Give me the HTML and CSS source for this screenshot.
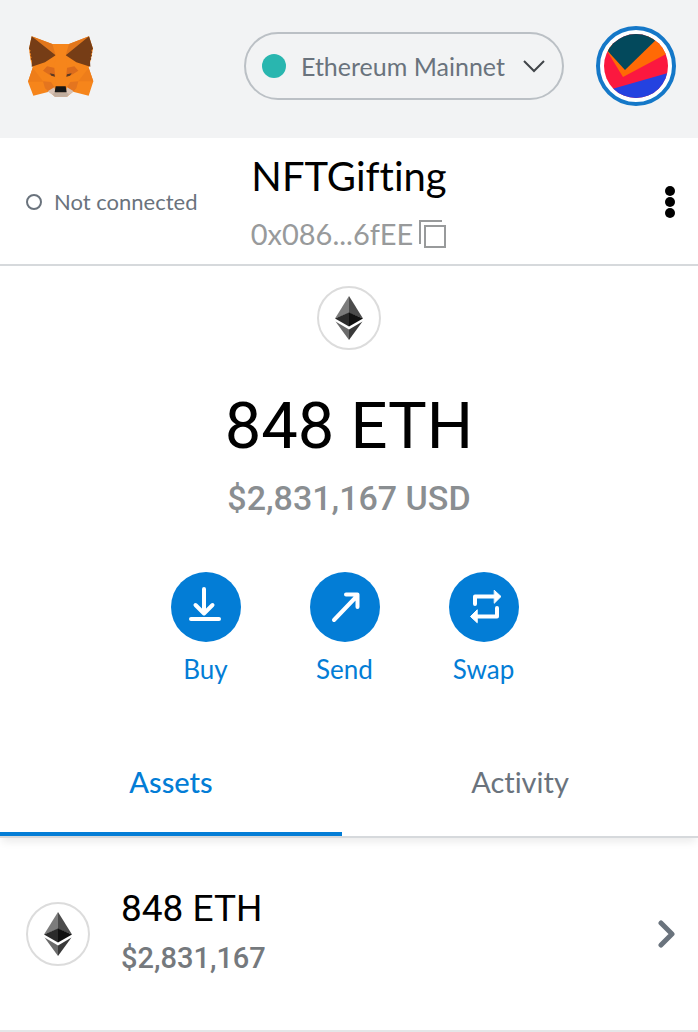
FILE: index.html
```html
<!DOCTYPE html>
<html lang="en">
<head>
    <meta charset="utf-8">
    <meta name="viewport" content="width=device-width, initial-scale=1">
    <title>MetaMask</title>
    <link rel="stylesheet" href="styles.css">
</head>
<body>
    <!-- Shared Ethereum logo -->
    <svg class="sprite" width="0" height="0" aria-hidden="true">
        <symbol id="eth" viewBox="0 0 28 44">
            <path fill="#7c7c7c" d="M14 0L0 22.500 14 17z"/>
            <path fill="#4b4b4b" d="M14 0v17l14 5.500z"/>
            <path fill="#2b2b2b" d="M0 22.500L14 16.500V30.500z"/>
            <path fill="#101010" d="M28 22.500L14 16.500V30.500z"/>
            <path fill="#6b6b6b" d="M0.500 25.500L14 33.500V44z"/>
            <path fill="#3a3a3a" d="M27.500 25.500L14 33.500V44z"/>
        </symbol>
    </svg>

    <header class="app-header">
        <svg class="fox" viewBox="36 27 201 189" role="img" aria-label="MetaMask">
            <path fill="#f6851b" d="M50 31L112 54H162L222 31 234 68 228 98 221 125 235 166 221 209 174 197 156 212H120L102 197 55 209 39 167 53 125 46 98 42 68z"/>
            <path fill="#e2761b" d="M50 31L112 54 122 88zM222 31L162 54 152 88z"/>
            <path fill="#763d16" d="M50 31L42 68 47 74 44 79 48 84 46 89 50 94 47 99 51 104 50 122 90 109 122 88zM222 31L234 68 229 74 232 79 228 84 231 89 227 94 229 99 225 104 226 122 184 109 152 88z"/>
            <path fill="#ee7d1a" d="M53 125L39 167H84V140zM221 125L235 166H190V140z"/>
            <path fill="#f6851b" d="M53 125L84 166 90 134zM221 125L190 166 184 134z"/>
            <path fill="#dc6c1c" d="M84 134L96 121 120 126 122 152 104 147zM190 134L178 121 154 126 152 152 170 147z"/>
            <path fill="#e4751f" d="M84 166L108 168 118 184 102 197 90 187zM190 166L166 168 156 184 174 197 184 187z"/>
            <path fill="#f6851b" d="M122 88L118 126 124 180H150L156 126 152 88 148 54H126z"/>
            <path fill="#5b3a24" d="M104 142L118 145 120 152 109 149zM170 142L156 145 154 152 165 149z"/>
            <path fill="#d7c1b3" d="M98 196L118 184 122 199H152L156 184 176 196 156 212H120z"/>
            <path fill="#c0ad9e" d="M112 204L122 199H152L162 204 156 212H120z"/>
            <path fill="#161616" d="M122 181H152L155 199H119z"/>
        </svg>

        <div class="network">
            <span class="network-dot"></span>
            <select class="network-select" aria-label="Network">
                <option>Ethereum Mainnet</option>
            </select>
            <svg class="network-arrow" viewBox="0 0 22 13" aria-hidden="true"><path d="M1 1l10 10L21 1"/></svg>
        </div>

        <button class="avatar" aria-label="My accounts">
            <svg viewBox="0 0 64 64" aria-hidden="true">
                <path fill="#fb183f" d="M0 0h64v64H0z"/>
                <path fill="#ff6a05" d="M0 12L19 43 64 19V0H50z"/>
                <path fill="#03495c" d="M0 0H58L21 36 0 13z"/>
                <path fill="#2442e0" d="M8 55L64 39V64H8z"/>
            </svg>
        </button>
    </header>

    <section class="account-bar">
        <button class="status"><span class="status-dot"></span>Not connected</button>
        <div class="account">
            <h1 class="account-name">NFTGifting</h1>
            <button class="account-address">0x086...6fEE
                <svg class="copy-icon" viewBox="0 0 28 29" aria-hidden="true"><path d="M1 24V1h22M6 6h20v21H6z"/></svg>
            </button>
        </div>
        <button class="menu" aria-label="Account options">
            <svg viewBox="0 0 10 32" aria-hidden="true"><circle cx="5" cy="5" r="5"/><circle cx="5" cy="16" r="5"/><circle cx="5" cy="27" r="5"/></svg>
        </button>
    </section>

    <main>
        <section class="overview">
            <span class="token"><svg><use href="#eth"/></svg></span>
            <p class="balance">848 ETH</p>
            <p class="balance-usd">$2,831,167 USD</p>

            <div class="actions">
                <button class="action">
                    <span class="action-icon">
                        <svg viewBox="0 0 70 70" aria-hidden="true"><path d="M33 17v24M24.500 33L33 41.500 41.500 33M20 47H48"/></svg>
                    </span>
                    Buy
                </button>
                <button class="action">
                    <span class="action-icon">
                        <svg viewBox="0 0 70 70" aria-hidden="true"><path d="M24 48L47 24M36 22.500H47.500V35"/></svg>
                    </span>
                    Send
                </button>
                <button class="action">
                    <span class="action-icon">
                        <svg viewBox="0 0 70 70" aria-hidden="true">
                            <path d="M26 32V24.500H46M48 36V44.500H28"/>
                            <path class="solid" d="M45.500 18.500L52 24.500 45.500 31zM28 38L21.500 44.500 28 50.500z"/>
                        </svg>
                    </span>
                    Swap
                </button>
            </div>
        </section>

        <div class="tabs" role="tablist">
            <button class="tab active" role="tab" aria-selected="true">Assets</button>
            <button class="tab" role="tab" aria-selected="false">Activity</button>
        </div>

        <button class="asset">
            <span class="token"><svg><use href="#eth"/></svg></span>
            <span class="asset-text">
                <span class="asset-amount">848 ETH</span>
                <span class="asset-usd">$2,831,167</span>
            </span>
            <svg class="asset-arrow" viewBox="0 0 18 28" aria-hidden="true"><path d="M3 3l11 11L3 25"/></svg>
        </button>
    </main>
</body>
</html>
```
FILE: styles.css
```css
* { box-sizing: border-box; }
body {
    margin: 0;
    background: #fff;
    color: #000;
    font-family: Lato, "Liberation Sans", sans-serif;
    font-variant-ligatures: none;
}
h1, p { margin: 0; font-weight: 400; }
button {
    padding: 0;
    border: 0;
    background: none;
    color: inherit;
    font: inherit;
    font-variant-ligatures: none;
    cursor: pointer;
}
svg { display: block; }
.sprite { position: absolute; }

/* Header */
.app-header {
    display: flex;
    align-items: center;
    height: 138px;
    padding: 0 22px 6px 27px;
    background: #f2f3f4;
}
.fox { width: 67px; height: 63px; margin-right: auto; }
.network {
    display: flex;
    align-items: center;
    height: 68px;
    padding: 0 17px 0 16px;
    border: 2px solid #bbc0c5;
    border-radius: 34px;
}
.network-dot {
    width: 24px;
    height: 24px;
    margin-right: 15px;
    border-radius: 50%;
    background: #29b6af;
}
.network-select {
    appearance: none;
    margin-right: 18px;
    padding: 0;
    border: 0;
    background: none;
    color: #6a737d;
    font: 25px/32px Lato, "Liberation Sans", sans-serif;
}
.network-arrow { width: 22px; height: 13px; }
.network-arrow path { fill: none; stroke: #414549; stroke-width: 2; }
.avatar {
    width: 80px;
    height: 80px;
    margin-left: 32px;
    padding: 4px;
    border: 4px solid #1578c8;
    border-radius: 50%;
    background: #fff;
}
.avatar svg { width: 64px; height: 64px; border-radius: 50%; }

/* Account bar */
.account-bar {
    display: grid;
    grid-template-columns: 1fr auto 1fr;
    align-items: center;
    height: 128px;
    padding: 2px 22px 0;
    border-bottom: 2px solid #d6d9dc;
}
.status {
    display: flex;
    align-items: center;
    justify-self: start;
    padding-left: 4px;
    color: #6a737d;
    font-size: 22px;
    line-height: 28px;
}
.status-dot {
    width: 16px;
    height: 16px;
    margin-right: 12px;
    border: 2px solid #6a737d;
    border-radius: 50%;
}
.account { text-align: center; }
.account-name { font-size: 40px; line-height: 48px; }
.account-address {
    display: flex;
    align-items: center;
    gap: 6px;
    margin: 16px auto 0;
    color: #989a9b;
    font-size: 29px;
    line-height: 36px;
}
.copy-icon { width: 28px; height: 29px; }
.copy-icon path { fill: none; stroke: #989a9b; stroke-width: 2; }
.menu { justify-self: end; padding: 0 1px; }
.menu svg { width: 10px; height: 32px; }

/* Balance */
.overview {
    display: flex;
    flex-direction: column;
    align-items: center;
    padding-top: 20px;
}
.token {
    display: flex;
    align-items: center;
    justify-content: center;
    width: 64px;
    height: 64px;
    border: 2px solid #dcdcdc;
    border-radius: 50%;
}
.token svg { width: 28px; height: 44px; }
.balance {
    margin-top: 36px;
    font-family: Roboto, sans-serif;
    font-size: 65px;
    line-height: 80px;
}
.balance-usd {
    margin-top: 12px;
    color: #8a8e91;
    font-family: Roboto, sans-serif;
    font-size: 34px;
    font-weight: 500;
    line-height: 40px;
}
.actions {
    display: flex;
    gap: 69px;
    margin-top: 54px;
    padding-right: 9px;
}
.action {
    width: 70px;
    color: #037dd6;
    font-size: 26px;
    line-height: 32px;
}
.action-icon {
    display: block;
    height: 70px;
    margin-bottom: 11px;
    border-radius: 50%;
    background: #037dd6;
}
.action-icon path {
    fill: none;
    stroke: #fff;
    stroke-width: 4;
    stroke-linecap: round;
    stroke-linejoin: round;
}
.action-icon .solid { fill: #fff; stroke-width: 1; }

/* Tabs */
.tabs {
    display: flex;
    margin-top: 47px;
    border-bottom: 2px solid #d6d9dc;
    box-shadow: 0 6px 8px -2px rgba(0, 0, 0, 0.08);
}
.tab {
    flex: 1;
    height: 104px;
    border-bottom: 4px solid transparent;
    color: #6a737d;
    font-size: 29px;
    line-height: 34px;
}
.tab.active {
    flex: 0 0 49%;
    border-color: #037dd6;
    color: #037dd6;
    font-weight: 500;
}

/* Asset list */
.asset {
    display: flex;
    align-items: center;
    width: 100%;
    height: 194px;
    padding: 0 22px 0 26px;
    border-bottom: 2px solid #e4e6e8;
    font-family: Roboto, sans-serif;
    text-align: left;
}
.asset-text {
    display: flex;
    flex: 1;
    flex-direction: column;
    gap: 8px;
    margin-left: 31px;
    padding-bottom: 6px;
}
.asset-amount { font-size: 37px; line-height: 46px; }
.asset-usd {
    color: #75797d;
    font-size: 29px;
    font-weight: 500;
    line-height: 36px;
}
.asset-arrow { width: 18px; height: 28px; }
.asset-arrow path {
    fill: none;
    stroke: #6a737d;
    stroke-width: 5;
    stroke-linecap: round;
    stroke-linejoin: round;
}
```
